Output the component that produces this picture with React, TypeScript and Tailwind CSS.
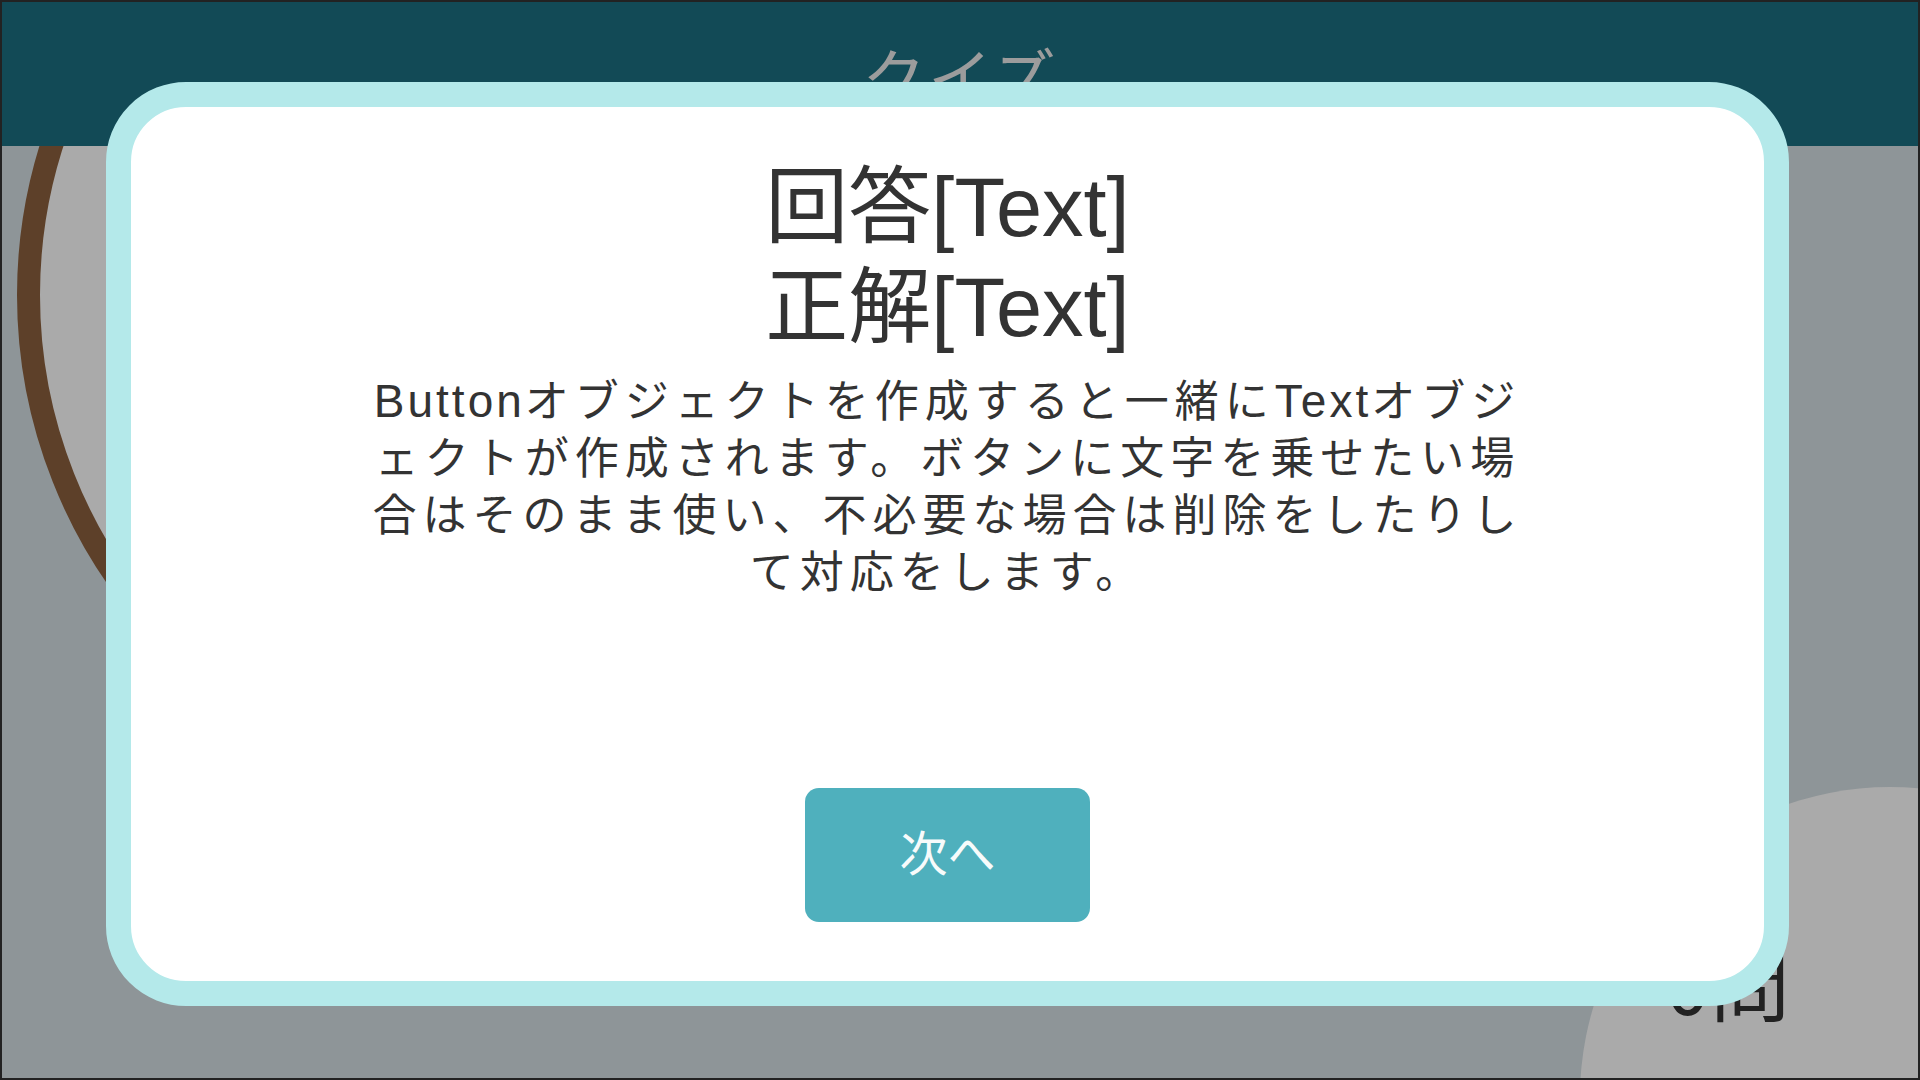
const jp = "font-['Liberation_Sans','Noto_Sans_CJK_JP',sans-serif]";

const bodyLines: { text: string; latin?: boolean }[][] = [
  [
    { text: "Button", latin: true },
    { text: "オブジェクトを作成すると一緒に" },
    { text: "Text", latin: true },
    { text: "オブジ" },
  ],
  [{ text: "ェクトが作成されます。ボタンに文字を乗せたい場" }],
  [{ text: "合はそのまま使い、不必要な場合は削除をしたりし" }],
  [{ text: "て対応をします。" }],
];

function AnswerDialog() {
  return (
    <div className="absolute left-[104px] top-[80px] z-20 h-[924px] w-[1683px] rounded-[80px] border-[25px] border-[#b4e9ea] bg-white">
      <div className={`flex h-full flex-col items-center pt-[51px] pb-[59px] text-[#333333] ${jp}`}>
        <div className="text-center text-[83px] leading-[100px]">
          <div>回答[Text]</div>
          <div>正解[Text]</div>
        </div>

        <div className="mt-[15px] text-center text-[44px] leading-[57px]">
          {bodyLines.map((line, i) => (
            <div key={i} className="whitespace-nowrap">
              {line.map((part, j) => (
                <span
                  key={j}
                  className={part.latin ? "text-[46px] tracking-[3px]" : "tracking-[6px]"}
                >
                  {part.text}
                </span>
              ))}
            </div>
          ))}
        </div>

        <button className="mt-auto flex h-[134px] w-[285px] items-center justify-center rounded-[14px] bg-[#4fb0bd] text-[48px] text-[#f7fbfb]">
          次へ
        </button>
      </div>
    </div>
  );
}

export default function App() {
  return (
    <div className="relative h-[1080px] w-[1920px] overflow-hidden border-2 border-[#222222] bg-[#8e9598]">
      {/* background decorations behind the dialog */}
      <div className="absolute left-[15px] top-[-214px] h-[1014px] w-[1014px] rounded-full border-[23px] border-[#5d4029] bg-[#aaaaaa]" />
      <div className="absolute left-[1578px] top-[785px] h-[620px] w-[620px] rounded-full bg-[#aaaaaa]" />
      <div className="absolute right-[128px] top-[938px] text-[80px] leading-[80px] text-[#222222] font-['Noto_Sans_CJK_JP',sans-serif]">
        0問
      </div>

      <header className="relative z-10 flex h-[144px] items-center justify-center bg-[#124a56]">
        <span className="text-[64px] tracking-[2px] text-[#9c9c9c] font-['Noto_Sans_CJK_JP',sans-serif]">
          クイズ
        </span>
      </header>

      <AnswerDialog />
    </div>
  );
}
